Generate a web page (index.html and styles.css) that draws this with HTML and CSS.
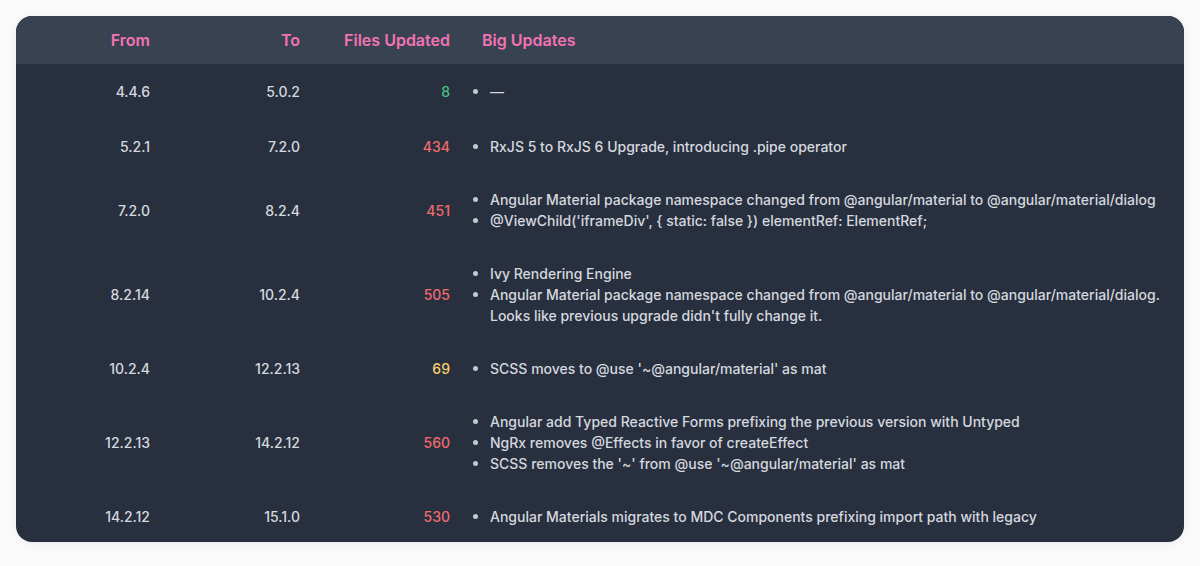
FILE: index.html
```html
<!DOCTYPE html>
<html lang="en">
<head>
<meta charset="utf-8">
<title>Angular upgrades</title>
<link rel="stylesheet" href="styles.css">
</head>
<body>
<div class="card">
  <table class="upgrades">
    <thead>
      <tr>
        <th class="num">From</th>
        <th class="num">To</th>
        <th class="num">Files Updated</th>
        <th class="txt">Big Updates</th>
      </tr>
    </thead>
    <tbody>
      <tr>
        <td class="num">4.4.6</td>
        <td class="num">5.0.2</td>
        <td class="num green">8</td>
        <td class="txt"><ul><li>—</li></ul></td>
      </tr>
      <tr>
        <td class="num">5.2.1</td>
        <td class="num">7.2.0</td>
        <td class="num red">434</td>
        <td class="txt"><ul><li>RxJS 5 to RxJS 6 Upgrade, introducing .pipe operator</li></ul></td>
      </tr>
      <tr>
        <td class="num">7.2.0</td>
        <td class="num">8.2.4</td>
        <td class="num red">451</td>
        <td class="txt"><ul>
          <li>Angular Material package namespace changed from @angular/material to @angular/material/dialog</li>
          <li>@ViewChild('iframeDiv', { static: false }) elementRef: ElementRef;</li>
        </ul></td>
      </tr>
      <tr>
        <td class="num">8.2.14</td>
        <td class="num">10.2.4</td>
        <td class="num red">505</td>
        <td class="txt"><ul>
          <li>Ivy Rendering Engine</li>
          <li>Angular Material package namespace changed from @angular/material to @angular/material/dialog. Looks like previous upgrade didn't fully change it.</li>
        </ul></td>
      </tr>
      <tr>
        <td class="num">10.2.4</td>
        <td class="num">12.2.13</td>
        <td class="num yellow">69</td>
        <td class="txt"><ul><li>SCSS moves to @use '~@angular/material' as mat</li></ul></td>
      </tr>
      <tr>
        <td class="num">12.2.13</td>
        <td class="num">14.2.12</td>
        <td class="num red">560</td>
        <td class="txt"><ul>
          <li>Angular add Typed Reactive Forms prefixing the previous version with Untyped</li>
          <li>NgRx removes @Effects in favor of createEffect</li>
          <li>SCSS removes the '~' from @use '~@angular/material' as mat</li>
        </ul></td>
      </tr>
      <tr>
        <td class="num">14.2.12</td>
        <td class="num">15.1.0</td>
        <td class="num red">530</td>
        <td class="txt"><ul><li>Angular Materials migrates to MDC Components prefixing import path with legacy</li></ul></td>
      </tr>
    </tbody>
  </table>
</div>
</body>
</html>
```

FILE: styles.css
```css
html, body {
  margin: 0;
  padding: 0;
  background: #fafafa;
}

body {
  padding: 16px;
  font-family: Inter, "Noto Sans", "Liberation Sans", sans-serif;
}

.card {
  background: #283040;
  border-radius: 16px;
  overflow: hidden;
  box-shadow: 0 2px 10px rgba(0, 0, 0, 0.06);
}

.upgrades {
  width: 100%;
  border-collapse: collapse;
  table-layout: fixed;
}

.upgrades thead tr {
  background: #384250;
}

.upgrades th {
  color: #f472b6;
  font-size: 16px;
  font-weight: 600;
  line-height: 22px;
  padding: 13px 16px;
  height: 22px;
}

.upgrades th.num { width: 118px; }

.upgrades td {
  color: #d5d8de;
  font-size: 14px;
  font-weight: 500;
  line-height: 21px;
  padding: 16px;
  vertical-align: middle;
}

.upgrades tbody tr:first-child td {
  padding-top: 17px;
  padding-bottom: 18px;
}

.upgrades tbody tr:last-child td {
  padding-bottom: 15px;
}

.num { text-align: right; }
.txt { text-align: left; }

.green { color: #46c07f !important; }
.red { color: #f06b6b !important; }
.yellow { color: #f8cf6a !important; }

.upgrades ul {
  margin: 0;
  padding: 0 0 0 8px;
  list-style: disc;
}

.upgrades li {
  margin: 0;
  padding-left: 0;
}

.upgrades li::marker {
  color: #c3c8d0;
  font-size: 15px;
}
```
